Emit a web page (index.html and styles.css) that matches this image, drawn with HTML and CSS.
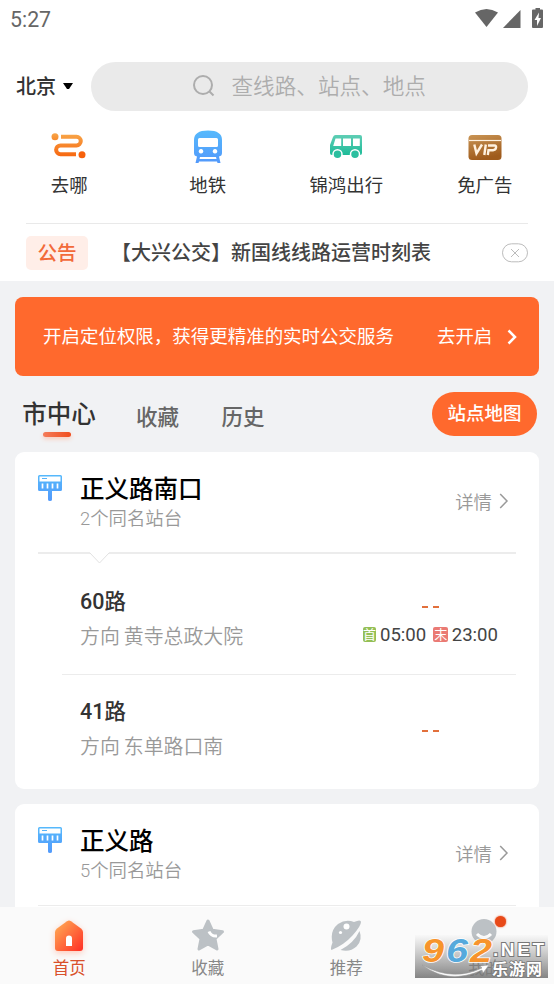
FILE: index.html
```html
<!DOCTYPE html>
<html lang="zh-CN">
<head>
<meta charset="utf-8">
<title>实时公交</title>
<link rel="stylesheet" href="styles.css">
</head>
<body>
<svg width="0" height="0" class="defs">
  <defs>
    <linearGradient id="orange" x1="0" y1="0" x2="0" y2="1"><stop offset="0" stop-color="#f8a64a"/><stop offset="1" stop-color="#f78a2c"/></linearGradient>
    <linearGradient id="route" gradientUnits="userSpaceOnUse" x1="0" y1="0" x2="0" y2="26"><stop offset="0" stop-color="#f8a94b"/><stop offset="1" stop-color="#f7610b"/></linearGradient>
    <linearGradient id="blue" x1="0" y1="0" x2="0" y2="1"><stop offset="0" stop-color="#56b9fc"/><stop offset="1" stop-color="#5299fb"/></linearGradient>
    <linearGradient id="green" x1="0" y1="0" x2="0" y2="1"><stop offset="0" stop-color="#5fceb5"/><stop offset="1" stop-color="#1dbb98"/></linearGradient>
    <linearGradient id="brown" x1="0" y1="0" x2=".3" y2="1"><stop offset="0" stop-color="#c99454"/><stop offset="1" stop-color="#9f5b1c"/></linearGradient>
    <linearGradient id="home" x1="0" y1="0" x2="1" y2="1"><stop offset=".1" stop-color="#ffa552"/><stop offset=".95" stop-color="#ff3427"/></linearGradient>
    <symbol id="stop" viewBox="0 0 24 26">
      <path fill="url(#blue)" d="M1.500 0h21A1.500 1.500 0 0 1 24 1.500v13a1.500 1.500 0 0 1-1.500 1.500H14v8.500q0 1.500-2 1.500t-2-1.500V16H1.500A1.500 1.500 0 0 1 0 14.500v-13A1.500 1.500 0 0 1 1.500 0z"/>
      <path fill="#fff" d="M1.500 1.500h21v5h-21z"/><path stroke="#56b3fa" d="M4 3.500h5"/>
      <path stroke="#fff" stroke-width="1.700" d="M4.500 8.500v5M9.500 8.500v5M14.500 8.500v5M19.500 8.500v5"/>
    </symbol>
    <symbol id="chev" viewBox="0 0 10 16"><path fill="none" stroke="currentColor" d="M1.200 1 8 8 1.200 15" stroke-width="1.500"/></symbol>
  </defs>
</svg>
<div class="screen">
  <header class="status">
    <span>5:27</span>
    <svg width="72" height="22" viewBox="0 0 72 22" fill="#666">
      <path d="M0 4.500Q11.500-2.500 23 4.500L11.500 19z"/><path d="M45.500 2v18H28z"/>
      <path d="M58.500 1.500h2V0H65v1.500h2a1 1 0 0 1 1 1V19a1 1 0 0 1-1 1h-9a1 1 0 0 1-1-1V2.500a1 1 0 0 1 1-1z"/><path fill="#fff" d="M64 4.500 59.500 12h2.500v6l4-8h-2.500z"/>
    </svg>
  </header>
  <div class="searchbar">
    <span class="city">北京</span><i class="caret"></i>
    <div class="search">
      <svg width="23" height="23" viewBox="0 0 23 23" fill="none" stroke="#adadad" stroke-width="2"><circle cx="10" cy="10" r="9"/><path d="m16.500 16.500 4 4"/></svg>
      <span>查线路、站点、地点</span>
    </div>
  </div>
  <nav class="shortcuts">
    <a><svg width="36" height="34" viewBox="0 -2.700 36 34"><circle cx="4" cy="4" r="3.500" fill="url(#orange)"/><circle cx="31" cy="22" r="3.500" fill="#f7610b"/><path fill="none" stroke="url(#route)" stroke-width="4" d="M10 4.100H25.500a4.300 4.300 0 0 1 0 8.600H9.500a4.300 4.300 0 0 0 0 8.800H25"/></svg><span>去哪</span></a>
    <a><svg width="30" height="34" viewBox="0 0 30 34"><path fill="url(#blue)" fill-rule="evenodd" d="M1 10Q1 .5 15 .5T29 10v13q0 3-3 3.500l1.500 6.500h-3l-.5-1.500H6L5.500 33h-3L4 26.500q-3-.5-3-3.500zM6.500 8A1.500 1.500 0 0 0 5 9.500v6q0 1.500 1.500 1.500h17q1.500 0 1.500-1.500v-6Q25 8 23.500 8zM8 19a2.300 2.300 0 1 0 .01 0zM22 19a2.300 2.300 0 1 0 .01 0zM7 27l-.5 2h17l-.5-2z"/></svg><span>地铁</span></a>
    <a><svg width="34" height="34" viewBox="0 -5 34 34"><path fill="url(#green)" d="M6.500 0H31q2 0 2 2v16q0 2-2 2H3q-2 0-2-2v-8L4 2q.8-2 2.500-2z"/><path fill="#fff" d="M6.500 3.500h5.700V11H4.200zM14 3.500h8V11h-8zM24 3.500h6.800V11H24z"/><g fill="#2bbf9f" stroke="#fff" stroke-width="1.500"><circle cx="8.500" cy="19.300" r="4.500"/><circle cx="26" cy="19.300" r="4.500"/></g></svg><span>锦鸿出行</span></a>
    <a><svg width="34" height="34" viewBox="0 -4.500 34 34"><rect x=".5" y=".5" width="33" height="25" rx="3.500" fill="url(#brown)"/><path stroke="#fff1df" d="M1 6h32" stroke-width="1.200"/><g fill="none" stroke="#fff1df" stroke-width="2.400"><path d="M6.300 10 8.500 19 14 10M17.800 10 16.300 20.500M20 11h6.500q2 0 1.500 2.300t-3 2.400h-4.500l-.7 4.800"/></g></svg><span>免广告</span></a>
  </nav>
  <div class="notice">
    <b class="tag">公告</b><span class="news">【大兴公交】新国线线路运营时刻表</span>
    <svg width="26" height="20" viewBox="0 0 26 20" fill="none" stroke="#bcbcbc"><rect x=".5" y=".8" width="25" height="18" rx="9"/><path d="m9 6 8 8m0-8-8 8"/></svg>
  </div>
  <main>
    <div class="banner"><span>开启定位权限，获得更精准的实时公交服务</span><span class="go">去开启</span><svg width="11" height="16" viewBox="0 0 11 16" fill="none" stroke="#fff" stroke-width="2.500"><path d="m1.500 1.500 6.500 6.500-6.500 6.500"/></svg></div>
    <div class="tabs"><span class="tab on">市中心</span><span class="tab">收藏</span><span class="tab">历史</span><b class="map">站点地图</b></div>
    <section class="card first">
      <div class="station"><svg class="sign" width="24" height="26"><use href="#stop"/></svg><div class="names"><h2>正义路南口</h2><p>2个同名站台</p></div><span class="more">详情<svg width="10" height="16"><use href="#chev"/></svg></span></div>
      <svg class="rule" width="478" height="12" viewBox="0 0 478 12" fill="none" stroke="#ececec"><path stroke-width="2" d="M0 1h52M71 1h407"/><path stroke="#e2e2e2" d="m52 1 9.500 10L71 1"/></svg>
      <div class="line">
        <div class="dest"><h3>60路</h3><p>方向<i></i>黄寺总政大院</p></div>
        <div class="times"><div class="dash"><i></i><i></i></div><div class="hours"><em>首</em>05:00<em class="last">末</em>23:00</div></div>
      </div>
      <div class="line second">
        <div class="dest"><h3>41路</h3><p>方向<i></i>东单路口南</p></div>
        <div class="times lone"><div class="dash"><i></i><i></i></div></div>
      </div>
    </section>
    <section class="card next">
      <div class="station"><svg class="sign" width="24" height="26"><use href="#stop"/></svg><div class="names"><h2>正义路</h2><p>5个同名站台</p></div><span class="more">详情<svg width="10" height="16"><use href="#chev"/></svg></span></div>
      <div class="thin"></div>
    </section>
  </main>
  <footer>
    <a class="on"><svg class="glow" width="34" height="34" viewBox="0 0 34 34"><path fill="url(#home)" d="M15 2.200q2-1.400 4 0l10 7.300q2 1.500 2 3.500v16q0 3-3 3H6q-3 0-3-3V13q0-2 2-3.500z"/><path fill="#fff" d="M14 27v-7.500q0-3 3-3t3 3V27z"/></svg><span>首页</span></a>
    <a><svg width="34" height="34" viewBox="0 0 34 34"><path fill="#bcc1c5" stroke="#bcc1c5" stroke-width="3" stroke-linejoin="round" d="m17 2 4.300 9.300 10.200 1.400-7.500 7 2 10.300-9-5-9 5 2-10.300-7.500-7 10.200-1.400z"/><path fill="none" stroke="#fff" stroke-width="3" d="M18 12.500q2 5 8 4.500"/></svg><span>收藏</span></a>
    <a><svg width="34" height="34" viewBox="0 0 34 34" fill="#bcc1c5"><path d="M2.500 31q-1.500-1 1-7.500Q.5 12 9 5 17-.5 25 3q7-3 7 0 0 4-8.500 13.500T2.500 31z"/><path d="M11.500 31Q25 24 30.500 12q3.500 9-3 15.500-6.500 6-16 3.500z"/><circle cx="17.500" cy="7.500" r="3" fill="#fff"/><circle cx="11.500" cy="13.500" r="1.600" fill="#fff"/></svg><span>推荐</span></a>
    <a class="mine"><svg width="34" height="34" viewBox="0 0 34 34"><circle cx="16" cy="12.500" r="12.500" fill="#bcc1c5"/><path fill="none" stroke="#fff" stroke-width="3" d="M9 15q7 7 14 0"/></svg><span>我的</span><i class="dot"></i></a>
  </footer>
  <svg class="mark" width="139" height="46" viewBox="0 0 139 46">
    <defs><linearGradient id="shade" x1="0" y1="0" x2="0" y2="1"><stop offset="0" stop-color="#888" stop-opacity=".02"/><stop offset="1" stop-color="#777" stop-opacity=".9"/></linearGradient></defs>
    <path fill="url(#shade)" d="M0 1h133v43H0z"/>
    <path fill="#fff" stroke="#999" stroke-width=".5" d="M7 31Q38 48 67 34l-2-2 9-1-6 8-1-3Q34 51 7 31z"/>
    <g class="digits"><text x="7" y="28" textLength="22" lengthAdjust="spacingAndGlyphs" fill="#f7942c">9</text><text x="31" y="28" textLength="22" lengthAdjust="spacingAndGlyphs" fill="#56a9dc">6</text><text x="55" y="28" textLength="22" lengthAdjust="spacingAndGlyphs" fill="#f7942c">2</text></g>
    <text class="net" x="78" y="21.500" textLength="51">.NET</text>
    <text class="cn" x="77" y="40.500" textLength="50">乐游网</text>
  </svg>
</div>
</body>
</html>
```
FILE: styles.css
```css
* { box-sizing: border-box; margin: 0; padding: 0; }
body { width: 554px; height: 984px; overflow: hidden; background: #fff; font-family: Roboto, "Noto Sans CJK SC", sans-serif; color: #333; }
i, em { font-style: normal; }
.defs { position: absolute; }
svg { display: block; flex: none; }
.screen { position: relative; display: flex; flex-direction: column; height: 984px; overflow: hidden; }

.status { display: flex; justify-content: space-between; height: 61px; padding: 8px 10px 0 10px; font-size: 21.3px; line-height: 23px; color: #666; }
.status svg { margin-right: -3px; }

.searchbar { display: flex; align-items: center; height: 50px; padding-left: 16px; }
.city { width: 47px; font-size: 20px; font-weight: 500; line-height: 30px; padding-top: 1px; }
.caret { width: 10px; height: 6px; margin-right: 18px; background: #000; clip-path: polygon(0 0, 100% 0, 60% 100%, 40% 100%); }
.search { display: flex; align-items: center; width: 437px; height: 49px; padding-left: 102px; border-radius: 25px; background: #eaeaea; font-size: 21.6px; line-height: 32px; color: #adadad; font-weight: 350; }
.search span { margin-left: 15.5px; padding-top: 1px; }

.shortcuts { display: grid; grid-template-columns: repeat(4, 1fr); height: 112px; padding-top: 19px; }
.shortcuts a { display: flex; flex-direction: column; align-items: center; font-size: 18.4px; line-height: 28px; }
.shortcuts span { margin-top: 8px; }

.notice { display: flex; align-items: center; height: 58px; margin: 0 26px; border-top: 1px solid #e9e9e9; }
.tag { width: 62px; height: 34px; border-radius: 5px; background: #ffeee8; color: #f26a3a; font-size: 19.6px; font-weight: 500; line-height: 35px; text-align: center; }
.news { flex: 1; margin-left: 23px; font-size: 20px; font-weight: 500; line-height: 30px; color: #444; white-space: nowrap; }

main { flex: 1; padding: 16px 15px 0; background: #f1f2f4; overflow: hidden; }
.banner { display: flex; align-items: center; height: 79px; padding-left: 28px; border-radius: 8px; background: #ff692d; color: #fff; font-size: 18.48px; line-height: 28px; white-space: nowrap; }
.go { margin: 0 15px 0 43px; }
.tabs { display: flex; height: 76px; padding: 16px 2px 0 7px; align-items: flex-start; }
.tab { margin: 10px 42.500px 0 0; font-size: 21.5px; line-height: 32px; font-weight: 500; color: #666; }
.on.tab { display: flex; flex-direction: column; align-items: center; width: 74px; margin: 4px 40px 0 0; font-size: 24.5px; line-height: 38px; color: #333; }
.on.tab::after { content: ""; width: 28px; height: 5px; margin: -2px 5px 0 0; border-radius: 3px; background: linear-gradient(90deg, #f47b59, #f04c1c); box-shadow: 0 2px 4px #f9c9b9; }
.map { width: 105px; height: 44px; margin-left: auto; border-radius: 22px; background: #ff692d; color: #fff; font-size: 18.5px; font-weight: 500; line-height: 45px; text-align: center; }

.card { border-radius: 9px; background: #fff; padding: 0 23px; }
.first { height: 337px; margin-bottom: 15px; }
.next { height: 120px; }
.station { display: flex; height: 100px; padding-top: 19px; }
.sign { margin-top: 4px; }
.names { flex: 1; margin-left: 18px; }
h2 { font-size: 24.5px; font-weight: 500; line-height: 37px; color: #000; }
.names p { margin-top: -1px; font-size: 18.4px; line-height: 24px; color: #999; font-weight: 350; }
.more { display: flex; align-items: center; gap: 7px; height: 30px; margin: 15px 7px 0 0; font-size: 18.4px; font-weight: 350; color: #999; }
.line { display: flex; justify-content: space-between; height: 110px; margin-left: 24px; padding: 22px 18px 0; }
.second { padding-top: 21px; border-top: 1px solid #ececec; }
h3 { font-size: 21.5px; font-weight: 500; line-height: 32px; }
.dest p { display: flex; margin-top: 3px; font-size: 19.9px; font-weight: 350; line-height: 34px; color: #999; }
.dest p i { width: 4px; }
.times { width: 136px; padding-top: 20px; }
.dash { display: flex; gap: 5px; margin-left: 60px; }
.dash i { width: 6px; height: 2px; background: #e2703c; }
.hours { display: flex; align-items: center; margin: 15px 0 0 .5px; font-size: 18.6px; line-height: 24px; color: #444; white-space: nowrap; }
.hours em { width: 15px; height: 15px; margin: -1px 3.5px 0 0; border-radius: 2px; background: #94bf56; color: #fff; font-size: 13px; line-height: 15px; text-align: center; }
.hours .last { width: 16px; margin-left: 7px; background: #ea7a74; }
.times.lone { width: 76px; padding-top: 34px; }
.lone .dash { margin-left: 0; }
.thin { height: 1px; background: #ececec; margin-top: 1px; }

footer { display: grid; grid-template-columns: repeat(4, 1fr); height: 77px; padding-top: 12px; background: #fafafa; }
footer a { position: relative; display: flex; flex-direction: column; align-items: center; font-size: 16.5px; line-height: 24px; color: #888; }
footer span { margin-top: 4px; }
footer a.on { color: #d9512c; }
.glow { filter: drop-shadow(0 2px 3px #ffc8b8); }
.dot { position: absolute; left: 79px; top: -3px; width: 11px; height: 11px; border-radius: 50%; background: #e84918; box-shadow: 0 0 2px #e84918; }
.mark { position: absolute; left: 415px; top: 934px; overflow: visible; }
.digits { font: italic bold 34px "Liberation Sans", sans-serif; stroke: #fff; stroke-width: 1.5px; paint-order: stroke; }
.net { font: bold 19px "Liberation Sans", sans-serif; fill: #fff; stroke: #777; stroke-width: 2px; paint-order: stroke; }
.cn { font: bold 16px "Noto Sans CJK SC", sans-serif; fill: #fff; stroke: #777; stroke-width: 1.5px; paint-order: stroke; }
```
